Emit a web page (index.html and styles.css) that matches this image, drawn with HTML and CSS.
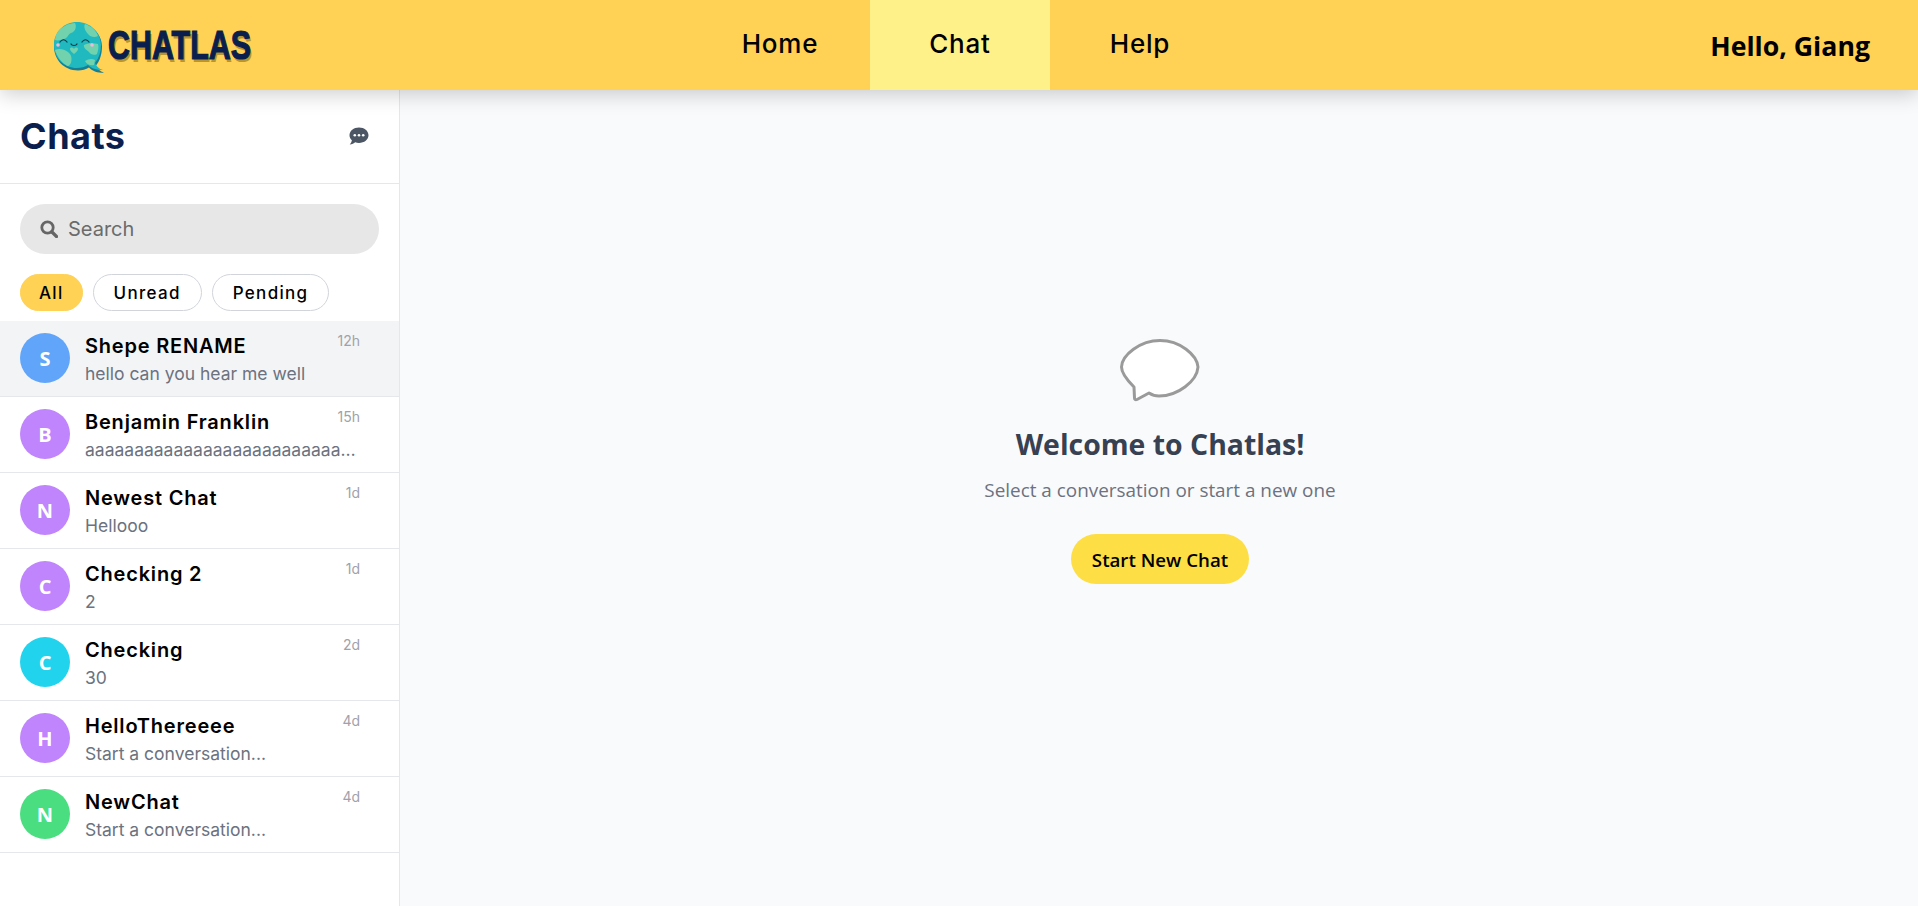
FILE: index.html
```html
<!DOCTYPE html>
<html lang="en">
<head>
    <meta charset="UTF-8">
    <meta name="viewport" content="width=device-width, initial-scale=1.0">
    <title>Chatlas</title>
    <link rel="stylesheet" href="styles.css">
</head>
<body>
    <header class="topbar">
        <div class="logo">
            <svg class="logo-globe" viewBox="0 0 52 52" width="52" height="52">
                <path d="M24 1C11 1 1 11 1 24s10 24 24 24c4 0 8-1 11-3 3 3 8 6 15 5-4-1-7-4-8-7 4-5 6-12 6-19C49 11 38 1 24 1z" fill="#147f96" transform="translate(0 1.500)"/>
                <path d="M24 1C11 1 1 11 1 24s10 23 23 23c4 0 8-1 11-3 3 3 8 5 15 5-4-1-7-4-8-7 4-5 6-11 6-18C48 11 37 1 24 1z" fill="#1fb9bf"/>
                <path d="M7 8c5-4 10-6 15-6 2 4 0 9-4 10-3 1-3 5-7 6-4 1-6 2-9 1 0-4 2-8 5-11zM32 3c6 2 11 6 13 12-3 2-8 1-10-2-2-2-5-7-3-10zM2 29c4-2 9-1 13 2 4 3 4 7 3 11-2 3-3 4-5 2C8 41 4 35 2 29zM31 24c4-2 9-2 14-1 1 3 0 7-1 10-3 2-7 0-8-2-2-2-6-4-5-7zM32 40c3-2 7-3 10-1l-1 5c-3 1-7 0-9-4z" fill="#72d2ae"/>
                <path d="M7 21c2-3 5-3 7 0M29 21c2-3 5-3 7 0M18 23c1 2 5 2 6 0" fill="none" stroke="#10323f" stroke-width="1.200" stroke-linecap="round"/>
                <circle cx="5" cy="24" r="1.800" fill="#f2b8dc"/>
                <circle cx="39" cy="24" r="1.800" fill="#f2b8dc"/>
                <path d="M21 33c-2-2-4-3-4-5 0-2 3-2 4 0 1-2 4-2 4 0 0 2-2 3-4 5z" fill="#72d2ae"/>
            </svg>
            <span class="logo-text">CHATLAS</span>
        </div>
        <nav class="nav">
            <a class="nav-item" href="#">Home</a>
            <a class="nav-item active" href="#">Chat</a>
            <a class="nav-item" href="#">Help</a>
        </nav>
        <div class="greeting">Hello, Giang</div>
    </header>

    <div class="page">
        <aside class="sidebar">
            <div class="sidebar-head">
                <h1>Chats</h1>
                <svg class="new-chat-icon" viewBox="0 0 20 20" width="20" height="20">
                    <path d="M10 1.500c5.300 0 9.500 3.400 9.500 7.700s-4.200 7.700-9.500 7.700c-1.400 0-2.700-.2-3.800-.7C5 17.300 3 18.500.7 18.500c1.200-1.300 2-2.800 2.200-4.300C1.400 12.900.5 11.100.5 9.200.5 4.900 4.700 1.500 10 1.500z" fill="#4b5563"/>
                    <circle cx="5.800" cy="9.200" r="1.300" fill="#fff"/>
                    <circle cx="10" cy="9.200" r="1.300" fill="#fff"/>
                    <circle cx="14.200" cy="9.200" r="1.300" fill="#fff"/>
                </svg>
            </div>

            <div class="search">
                <svg viewBox="0 0 18 18" width="18" height="18">
                    <circle cx="7.500" cy="7.500" r="5.700" fill="none" stroke="#666" stroke-width="2.800"/>
                    <path d="M12 12l4.500 4.500" stroke="#666" stroke-width="3.200" stroke-linecap="round"/>
                </svg>
                <span>Search</span>
            </div>

            <div class="filters">
                <button class="pill selected">All</button>
                <button class="pill">Unread</button>
                <button class="pill">Pending</button>
            </div>

            <ul class="chat-list">
                <li class="chat current">
                    <div class="avatar blue">S</div>
                    <div class="chat-body">
                        <div class="chat-head">
                            <span class="chat-name">Shepe RENAME</span>
                            <span class="chat-time">12h</span>
                        </div>
                        <div class="chat-preview">hello can you hear me well</div>
                    </div>
                </li>
                <li class="chat">
                    <div class="avatar purple">B</div>
                    <div class="chat-body">
                        <div class="chat-head">
                            <span class="chat-name">Benjamin Franklin</span>
                            <span class="chat-time">15h</span>
                        </div>
                        <div class="chat-preview">aaaaaaaaaaaaaaaaaaaaaaaaaaaaaaaaaaaaaaaa</div>
                    </div>
                </li>
                <li class="chat">
                    <div class="avatar purple">N</div>
                    <div class="chat-body">
                        <div class="chat-head">
                            <span class="chat-name">Newest Chat</span>
                            <span class="chat-time">1d</span>
                        </div>
                        <div class="chat-preview">Hellooo</div>
                    </div>
                </li>
                <li class="chat">
                    <div class="avatar purple">C</div>
                    <div class="chat-body">
                        <div class="chat-head">
                            <span class="chat-name">Checking 2</span>
                            <span class="chat-time">1d</span>
                        </div>
                        <div class="chat-preview">2</div>
                    </div>
                </li>
                <li class="chat">
                    <div class="avatar cyan">C</div>
                    <div class="chat-body">
                        <div class="chat-head">
                            <span class="chat-name">Checking</span>
                            <span class="chat-time">2d</span>
                        </div>
                        <div class="chat-preview">30</div>
                    </div>
                </li>
                <li class="chat">
                    <div class="avatar purple">H</div>
                    <div class="chat-body">
                        <div class="chat-head">
                            <span class="chat-name">HelloThereeee</span>
                            <span class="chat-time">4d</span>
                        </div>
                        <div class="chat-preview">Start a conversation...</div>
                    </div>
                </li>
                <li class="chat">
                    <div class="avatar green">N</div>
                    <div class="chat-body">
                        <div class="chat-head">
                            <span class="chat-name">NewChat</span>
                            <span class="chat-time">4d</span>
                        </div>
                        <div class="chat-preview">Start a conversation...</div>
                    </div>
                </li>
            </ul>
        </aside>

        <main class="welcome">
            <svg class="welcome-icon" viewBox="0 0 80 63" width="80" height="63">
                <path d="M14 48C8 42 1.500 35 1.500 28 2 16 20 1.500 40 1.500S77 16 78 28C77 42 58 57 39 57c-4 0-7-1-10-3L17 60.500c-1.500.7-2.500 0-2.500-1.500z" fill="#fff" stroke="#9a9a9a" stroke-width="3" stroke-linejoin="round"/>
            </svg>
            <h2>Welcome to Chatlas!</h2>
            <p>Select a conversation or start a new one</p>
            <button class="start-chat">Start New Chat</button>
        </main>
    </div>
</body>
</html>
```

FILE: styles.css
```css
* {
    box-sizing: border-box;
}
html, body {
    height: 100%;
}
body {
    margin: 0;
    font-family: "Inter", "Liberation Sans", sans-serif;
    color: #000;
    background-color: #f9fafb;
    overflow: hidden;
}

/* top bar */
.topbar {
    position: relative;
    z-index: 2;
    display: grid;
    grid-template-columns: 1fr auto 1fr;
    align-items: center;
    height: 90px;
    background-color: #ffd154;
    box-shadow: 0 4px 20px rgba(0, 0, 0, 0.2);
}
.logo {
    display: flex;
    align-items: center;
    padding-left: 53px;
}
.logo-globe {
    flex-shrink: 0;
    margin-top: 3px;
}
.logo-text {
    margin-left: 3px;
    font-family: "Liberation Sans", sans-serif;
    font-size: 40px;
    font-weight: 700;
    color: #0a1f4d;
    -webkit-text-stroke: 1.2px #0a1f4d;
    text-shadow: 2px 3px 0 #b9952f;
    transform: scaleX(0.76);
    transform-origin: left center;
}
.nav {
    display: flex;
    height: 100%;
    margin-left: 2px;
}
.nav-item {
    display: flex;
    align-items: center;
    justify-content: center;
    width: 180px;
    padding-bottom: 3px;
    font-size: 26px;
    font-weight: 500;
    letter-spacing: 0.8px;
    color: #000;
    text-decoration: none;
}
.nav-item.active {
    background-color: #fff189;
}
.greeting {
    justify-self: end;
    padding-right: 48px;
    margin-top: 1px;
    font-family: "Open Sans", sans-serif;
    font-size: 26.700px;
    font-weight: 700;
}

/* sidebar */
.page {
    display: flex;
    height: calc(100vh - 90px);
}
.sidebar {
    width: 400px;
    flex-shrink: 0;
    background-color: #fff;
    border-right: 1px solid #e5e7eb;
}
.sidebar-head {
    display: flex;
    align-items: center;
    justify-content: space-between;
    height: 94px;
    padding: 0 30px 2px 20px;
    border-bottom: 1px solid #e5e7eb;
}
.sidebar-head h1 {
    margin: 0;
    font-size: 36px;
    font-weight: 700;
    letter-spacing: 0.5px;
    color: #0a1f4d;
}
.search {
    display: flex;
    align-items: center;
    gap: 10px;
    height: 50px;
    margin: 20px 20px 0;
    padding: 0 20px;
    border-radius: 25px;
    background-color: #e7e7e7;
    font-size: 20px;
    color: #6b6b6b;
}
.filters {
    display: flex;
    gap: 10px;
    margin: 20px 20px 10px;
}
.pill {
    height: 37px;
    padding: 0 20px;
    border: 1px solid #d1d5db;
    border-radius: 19px;
    background-color: #fff;
    font-family: inherit;
    font-size: 17px;
    font-weight: 500;
    letter-spacing: 1.300px;
    color: #000;
}
.pill.selected {
    padding: 0 18px;
    border-color: #ffd154;
    background-color: #ffd154;
}
.chat-list {
    margin: 0;
    padding: 0;
    list-style: none;
}
.chat {
    display: flex;
    align-items: center;
    height: 76px;
    padding: 0 39px 1px 20px;
    border-bottom: 1px solid #e5e7eb;
}
.chat.current {
    background-color: #f3f4f6;
}
.avatar {
    display: flex;
    align-items: center;
    justify-content: center;
    width: 50px;
    height: 50px;
    flex-shrink: 0;
    border-radius: 50%;
    font-family: "Open Sans", sans-serif;
    font-size: 20px;
    font-weight: 700;
    color: #fff;
}
.blue { background-color: #60a5fa; }
.purple { background-color: #c084fc; }
.cyan { background-color: #22d3ee; }
.green { background-color: #4ade80; }
.chat-body {
    flex: 1;
    min-width: 0;
    margin-left: 15px;
    padding-top: 2px;
}
.chat-head {
    display: flex;
    align-items: flex-start;
    justify-content: space-between;
}
.chat-name {
    font-size: 20px;
    font-weight: 600;
    line-height: 28px;
    letter-spacing: 0.800px;
}
.chat-preview {
    overflow: hidden;
    margin-top: 2px;
    font-size: 17.500px;
    line-height: 24px;
    color: #6b7280;
    white-space: nowrap;
    text-overflow: ellipsis;
}
.chat-time {
    flex-shrink: 0;
    margin-top: -1px;
    font-size: 14px;
    line-height: 20px;
    color: #a1a1aa;
}

/* empty state */
.welcome {
    display: flex;
    flex: 1;
    flex-direction: column;
    align-items: center;
    padding: 249px 0 0 2px;
}
.welcome h2 {
    margin: 23px 0 0;
    font-family: "Open Sans", sans-serif;
    font-size: 28.400px;
    font-weight: 700;
    color: #374151;
}
.welcome p {
    margin: 14px 0 0;
    font-family: "Open Sans", sans-serif;
    font-size: 18.900px;
    color: #6b7280;
}
.start-chat {
    height: 50px;
    margin-top: 31px;
    padding: 0 21px;
    border: none;
    border-radius: 25px;
    background-color: #fdde44;
    font-family: "Open Sans", sans-serif;
    font-size: 18.700px;
    font-weight: 600;
    color: #000;
}
```
